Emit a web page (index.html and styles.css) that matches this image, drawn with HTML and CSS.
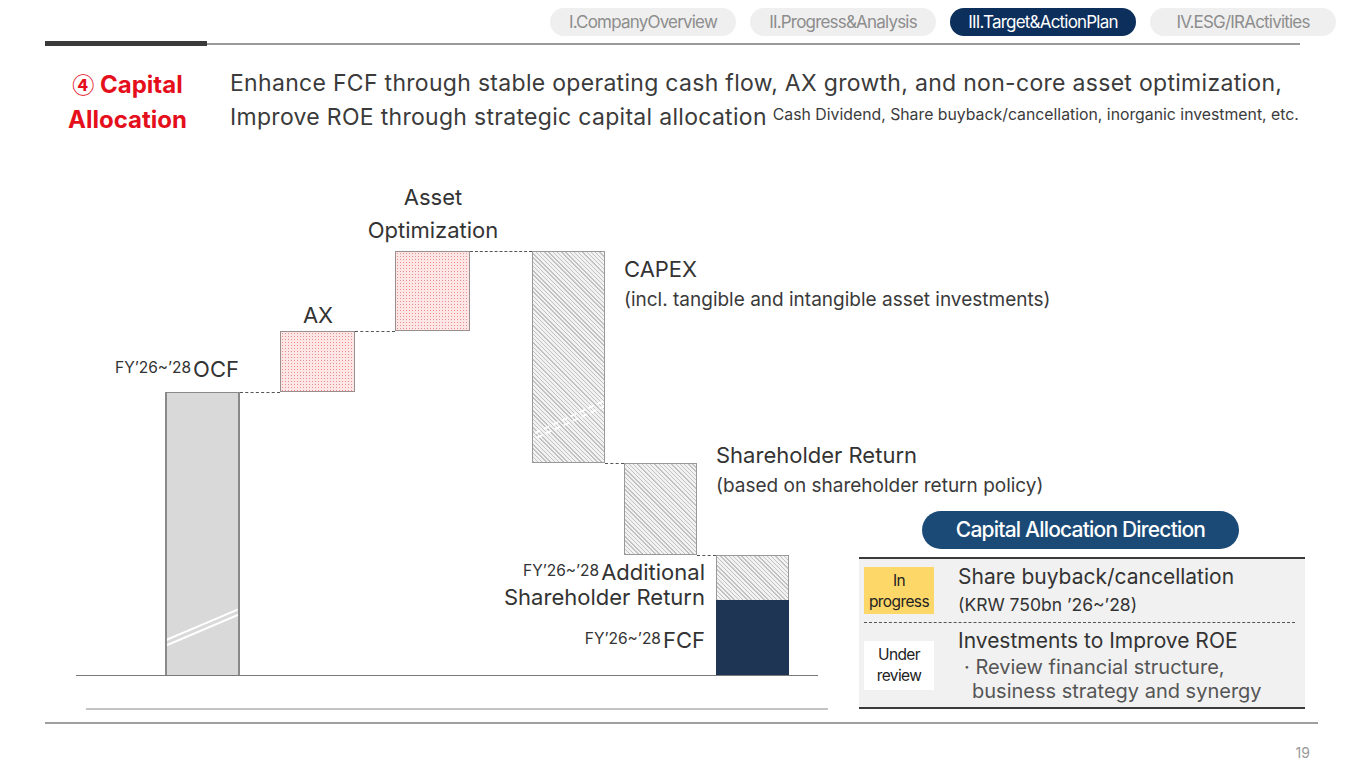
FILE: index.html
```html
<!DOCTYPE html>
<html lang="en">
<head>
<meta charset="utf-8">
<title>Capital Allocation</title>
<link rel="stylesheet" href="styles.css">
</head>
<body>
<div class="page">
  <header class="top">
    <nav class="tabs">
      <span class="tab">I.CompanyOverview</span>
      <span class="tab">II.Progress&amp;Analysis</span>
      <span class="tab active">III.Target&amp;ActionPlan</span>
      <span class="tab">IV.ESG/IRActivities</span>
    </nav>
    <div class="rule"><span class="rule-dark"></span><span class="rule-thin"></span></div>
  </header>

  <section class="title-row">
    <h1 class="section-title"><span class="circled">④</span> Capital<br>Allocation</h1>
    <p class="lead">Enhance FCF through stable operating cash flow, AX growth, and non-core asset optimization,<br>Improve ROE through strategic capital allocation<span class="lead-note">Cash Dividend, Share buyback/cancellation, inorganic investment, etc.</span></p>
  </section>

  <main class="main">
    <div class="chart">
      <div class="axis axis-main"></div>
      <div class="axis axis-shadow"></div>

      <div class="dash" style="left:195px;top:252px;width:40px"></div>
      <div class="dash" style="left:310px;top:191px;width:40px"></div>
      <div class="dash" style="left:425px;top:111px;width:62px"></div>
      <div class="dash" style="left:560px;top:323px;width:19px"></div>
      <div class="dash" style="left:652px;top:415px;width:19px"></div>

      <div class="bar bar-gray" style="left:120px;top:252px;width:75px;height:283px"><span class="brk brk-ocf"></span></div>
      <div class="bar bar-dots" style="left:235px;top:191px;width:75px;height:61px"></div>
      <div class="bar bar-dots" style="left:350px;top:111px;width:75px;height:80px"></div>
      <div class="bar bar-hatch" style="left:487px;top:111px;width:73px;height:212px"><span class="brk brk-capex"></span></div>
      <div class="bar bar-hatch" style="left:579px;top:323px;width:73px;height:92px"></div>
      <div class="bar bar-final" style="left:671px;top:415px;width:73px;height:120px">
        <div class="final-hatch"></div>
        <div class="final-navy"></div>
      </div>

      <div class="lbl lbl-right" style="right:620px;top:214px"><small>FY’26~’28</small>OCF</div>
      <div class="lbl lbl-center" style="left:233px;top:161px;width:80px">AX</div>
      <div class="lbl lbl-center lbl-two" style="left:308px;top:41px;width:160px">Asset<br>Optimization</div>
      <div class="lbl lbl-side" style="left:579px;top:114px">CAPEX<span class="sub">(incl. tangible and intangible asset investments)</span></div>
      <div class="lbl lbl-side" style="left:671px;top:300px">Shareholder Return<span class="sub">(based on shareholder return policy)</span></div>
      <div class="lbl lbl-right lbl-add" style="right:154px;top:418px"><small>FY’26~’28</small>Additional<br>Shareholder Return</div>
      <div class="lbl lbl-right" style="right:154px;top:485px"><small>FY’26~’28</small>FCF</div>
    </div>

    <aside class="panel">
      <div class="pill-wrap"><span class="pill">Capital Allocation Direction</span></div>
      <div class="table">
        <div class="row row-first">
          <span class="badge badge-yellow">In<br>progress</span>
          <div class="row-text">
            <div class="row-head">Share buyback/cancellation</div>
            <div class="row-sub">(KRW 750bn ’26~’28)</div>
          </div>
        </div>
        <div class="row row-second">
          <span class="badge badge-white">Under<br>review</span>
          <div class="row-text">
            <div class="row-head">Investments to Improve ROE</div>
            <div class="row-bullet">· Review financial structure,<br><span class="indent">business strategy and synergy</span></div>
          </div>
        </div>
      </div>
    </aside>
  </main>

  <footer class="foot">
    <div class="foot-rule"></div>
    <div class="page-num">19</div>
  </footer>
</div>
</body>
</html>
```

FILE: styles.css
```css
* { box-sizing: border-box; }
html, body { margin: 0; padding: 0; background: #fff; }
body { font-family: Inter, Roboto, "Noto Sans", "Liberation Sans", sans-serif; color: #3a3a3a; }

.page { width: 1365px; height: 768px; position: relative; overflow: hidden; }

/* header */
.top { padding-top: 8px; }
.tabs { display: flex; justify-content: flex-end; gap: 14px; padding-right: 29px; }
.tab {
  height: 28px; line-height: 28px; border-radius: 14px; background: #efefef; color: #8d8d8d;
  font-size: 17px; letter-spacing: -0.8px; text-align: center; width: 186px;
}
.tab.active { background: #0d2f5c; color: #fff; }
.rule { display: flex; align-items: center; margin: 5px 65px 0 45px; height: 5px; }
.rule-dark { width: 162px; height: 5px; background: #3a3a3a; }
.rule-thin { flex: 1; height: 2px; background: #9a9a9a; margin-top: 1px; }

/* title */
.title-row { display: flex; padding-left: 60px; margin-top: 20px; }
.section-title {
  margin: 0; width: 135px; text-align: center; color: #e50f1c; font-size: 24px; line-height: 35px; font-weight: 700;
  letter-spacing: 0;
}
.circled { font-family: "Noto Sans CJK KR", "DejaVu Sans", sans-serif; font-size: 22px; font-weight: 700; }
.lead { margin: 2px 0 0 35px; font-size: 23px; line-height: 31px; color: #3b3b3b; letter-spacing: 0.3px; }
.lead-note { font-size: 15.8px; vertical-align: 5px; letter-spacing: 0; margin-left: 6px; }

/* main */
.main { display: flex; height: 582px; margin-top: 3px; padding-left: 45px; }
.chart { position: relative; width: 814px; flex: none; }
.axis { position: absolute; height: 1px; }
.axis-main { left: 31px; top: 535px; width: 742px; background: #7a7a7a; }
.axis-shadow { left: 41px; top: 568px; width: 742px; background: #c4c4c4; height: 2px; }
.dash { position: absolute; height: 0; border-top: 1px dashed #555; }

.bar { position: absolute; border: 1px solid #8a8a8a; overflow: hidden; }
.bar-gray { background: #d9d9d9; border-color: #8a8a8a; border-width: 1px 2px 0 2px; }
.bar-dots {
  background-color: #fde6e6;
  background-image: radial-gradient(circle, #f08c8c 0.7px, transparent 0.9px);
  background-size: 3px 3px;
  border-color: #9a8f8f;
}
.bar-hatch {
  background: repeating-linear-gradient(45deg, #c2c2c2 0 1px, #f2f2f2 1px 3px);
  border-color: #999;
}
.bar-final { border: 0; display: flex; flex-direction: column; }
.final-hatch { height: 45px; border: 1px solid #999; border-bottom: 0;
  background: repeating-linear-gradient(45deg, #c2c2c2 0 1px, #f2f2f2 1px 3px); }
.final-navy { flex: 1; background: #1f3554; }

.brk { position: absolute; left: -10px; width: 120%; height: 7px; border-top: 2px solid #fff; border-bottom: 2px solid #fff; }
.brk-ocf { top: 232px; transform: rotate(-23deg); }
.brk-capex { top: 166px; transform: rotate(-25deg); border-top-style: dashed; border-bottom-style: dashed; }

.lbl { position: absolute; font-size: 22px; line-height: 28px; color: #333; white-space: nowrap; }
.lbl small { font-size: 15.5px; margin-right: 2px; vertical-align: 4px; }
.lbl-right { text-align: right; }
.lbl-center { text-align: center; }
.lbl-two { line-height: 33px; }
.lbl-side { line-height: 30px; }
.lbl-side .sub { display: block; font-size: 19px; line-height: 32px; color: #3a3a3a; }
.lbl-add { line-height: 25px; }

/* panel */
.panel { width: 446px; flex: none; align-self: flex-end; margin-bottom: 13px; }
.pill-wrap { padding-left: 63px; }
.pill {
  display: block; width: 317px; height: 38px; line-height: 38px; border-radius: 19px; background: #1b4a77; color: #fff;
  text-align: center; font-size: 21px; letter-spacing: -0.8px; font-weight: 500;
}
.table { margin-top: 8px; border-top: 2px solid #3a3a3a; border-bottom: 2px solid #3a3a3a; background: #f1f1f1; padding: 0 10px 0 5px; }
.row { display: flex; align-items: center; gap: 24px; }
.row-first { height: 64px; border-bottom: 1px dashed #555; }
.row-second { height: 84px; }
.badge { width: 70px; flex: none; display: flex; align-items: center; justify-content: center; text-align: center;
  font-size: 15.5px; line-height: 21px; letter-spacing: -0.6px; color: #222; }
.badge-yellow { background: #fdd868; height: 47px; }
.badge-white { background: #fff; height: 49px; }
.row-text { color: #333; }
.row-head { font-size: 21px; line-height: 28px; }
.row-sub { font-size: 17.5px; line-height: 28px; }
.row-bullet { font-size: 20px; line-height: 24px; color: #555; padding-left: 6px; }
.indent { padding-left: 8px; }

/* footer */
.foot { position: relative; }
.foot-rule { margin: 0 47px 0 45px; height: 2px; background: #9f9f9f; }
.page-num { position: absolute; right: 55px; top: 22px; font-size: 14px; color: #999; }
```
